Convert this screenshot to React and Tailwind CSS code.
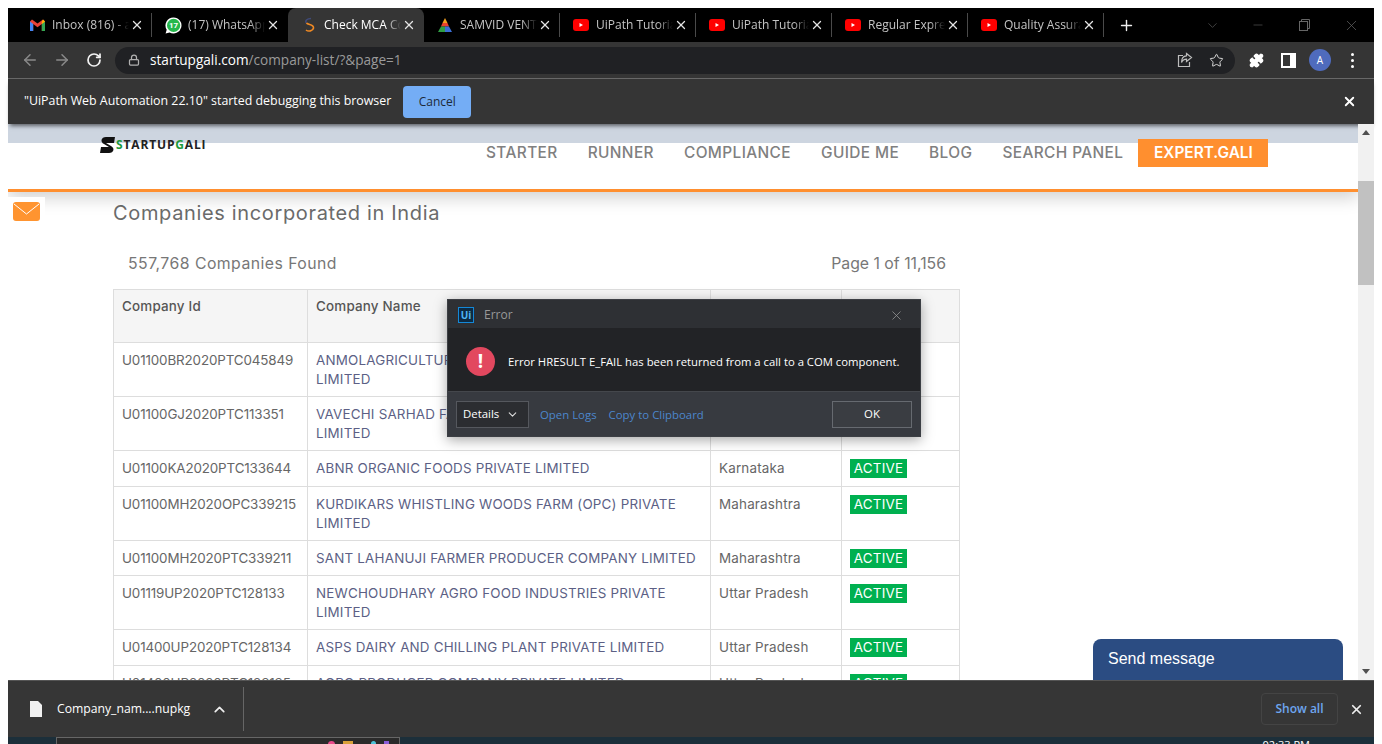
import { ArrowLeft, ArrowRight, RotateCw, Lock, Star, Puzzle, X, Plus, ChevronDown, ChevronUp, Minus } from 'lucide-react';

const GmailIcon = () => (
  <svg width="15" height="12" viewBox="0 0 15 12" className="shrink-0">
    <path d="M0 2.5 V12 H3.2 V5 L7.5 8.2 L11.8 5 V12 H15 V2.5 L13 .4 L7.5 4.6 L2 .4 Z" fill="#ea4335" />
    <path d="M0 2.5 V12 H3.2 V5 Z" fill="#4285f4" />
    <path d="M15 2.5 V12 H11.8 V5 Z" fill="#34a853" />
    <path d="M13 .4 L15 2.5 L11.8 5 V2.9 Z" fill="#fbbc04" />
  </svg>
);

const WhatsAppIcon = () => (
  <svg width="17" height="17" viewBox="0 0 17 17" className="shrink-0">
    <path d="M8.5 .5 A8 8 0 1 1 4.6 15.5 L.6 16.5 L1.7 12.7 A8 8 0 0 1 8.5 .5 Z" fill="#fff" />
    <circle cx="8.6" cy="8.4" r="6.6" fill="#25b84c" />
    <text x="8.6" y="11.2" textAnchor="middle" fontSize="8" fontWeight="700" fill="#fff" fontFamily="Roboto, sans-serif">17</text>
  </svg>
);

const SwirlIcon = () => (
  <svg width="14" height="16" viewBox="0 0 14 16" fill="none" className="shrink-0">
    <path d="M9 1.5 C5 1.5 2.5 4 4.5 6" stroke="#3f4a78" strokeWidth="1.5" />
    <path d="M4.5 6 C6 8 12 7.5 11.5 11 C11 14 6.5 15 4 13" stroke="#f08a24" strokeWidth="1.6" />
  </svg>
);

const TriangleIcon = () => (
  <svg width="16" height="16" viewBox="0 0 16 16" className="shrink-0">
    <polygon points="8,1 10.5,6 5.5,6" fill="#f2a01f" />
    <polygon points="5.5,6 10.5,6 12,9.5 4,9.5" fill="#e8432e" />
    <polygon points="4,9.5 8,9.5 8,15 1,15" fill="#2f9e44" />
    <polygon points="8,9.5 12,9.5 15,15 8,15" fill="#3b6fd6" />
  </svg>
);

const YoutubeIcon = () => (
  <svg width="16" height="14" viewBox="0 0 16 14" className="shrink-0">
    <rect x="0" y="1" width="16" height="12" rx="3" fill="#f00" />
    <polygon points="6.5,5 10,7 6.5,9" fill="#fff" />
  </svg>
);

const tabs = [
  { icon: GmailIcon, title: 'Inbox (816) - abc' },
  { icon: WhatsAppIcon, title: '(17) WhatsApp' },
  { icon: SwirlIcon, title: 'Check MCA Company', active: true },
  { icon: TriangleIcon, title: 'SAMVID VENTURES' },
  { icon: YoutubeIcon, title: 'UiPath Tutorial' },
  { icon: YoutubeIcon, title: 'UiPath Tutorial' },
  { icon: YoutubeIcon, title: 'Regular Expression' },
  { icon: YoutubeIcon, title: 'Quality Assurance' },
];

const navItems = ['STARTER', 'RUNNER', 'COMPLIANCE', 'GUIDE ME', 'BLOG', 'SEARCH PANEL'];

const rows = [
  { id: 'U01100BR2020PTC045849', name: 'ANMOLAGRICULTURE PRODUCER COMPANY\nLIMITED', state: 'Bihar', h: 'h-[54px]' },
  { id: 'U01100GJ2020PTC113351', name: 'VAVECHI SARHAD FARMERS PRODUCER COMPANY\nLIMITED', state: 'Gujarat', h: 'h-[54px]' },
  { id: 'U01100KA2020PTC133644', name: 'ABNR ORGANIC FOODS PRIVATE LIMITED', state: 'Karnataka', h: 'h-[36px]' },
  { id: 'U01100MH2020OPC339215', name: 'KURDIKARS WHISTLING WOODS FARM (OPC) PRIVATE\nLIMITED', state: 'Maharashtra', h: 'h-[54px]' },
  { id: 'U01100MH2020PTC339211', name: 'SANT LAHANUJI FARMER PRODUCER COMPANY LIMITED', state: 'Maharashtra', h: 'h-[35px]' },
  { id: 'U01119UP2020PTC128133', name: 'NEWCHOUDHARY AGRO FOOD INDUSTRIES PRIVATE\nLIMITED', state: 'Uttar Pradesh', h: 'h-[54px]' },
  { id: 'U01400UP2020PTC128134', name: 'ASPS DAIRY AND CHILLING PLANT PRIVATE LIMITED', state: 'Uttar Pradesh', h: 'h-[36px]' },
  { id: 'U01400UP2020PTC128135', name: 'AGRO PRODUCER COMPANY PRIVATE LIMITED', state: 'Uttar Pradesh', h: 'h-[35px]' },
];

const TabStrip = () => (
  <div className="h-[34px] bg-black flex items-stretch pl-2 shrink-0">
    {tabs.map((tab, i) => {
      const Icon = tab.icon;
      const nextActive = tabs[i + 1]?.active;
      return (
        <div key={i} className={`w-[136px] flex items-center ${tab.active ? 'bg-[#353535] rounded-t-lg' : ''}`}>
          <div className={`w-full h-6 flex items-center pl-[13px] border-r ${tab.active || nextActive ? 'border-transparent' : 'border-[#4a4a4a]'}`}>
            <div className="w-4 flex justify-center shrink-0"><Icon /></div>
            <div className={`ml-[7px] w-[77px] overflow-hidden whitespace-nowrap text-[12px] [mask-image:linear-gradient(to_right,black_80%,transparent)] ${tab.active ? 'text-white' : 'text-[#c4c4c4]'}`}>
              {tab.title}
            </div>
            <X size={14} strokeWidth={2.2} className="ml-[1px] text-[#e4e4e4] shrink-0" />
          </div>
        </div>
      );
    })}
    <div className="flex items-center ml-[14px]"><Plus size={17} strokeWidth={2} className="text-[#eee]" /></div>
    <div className="ml-auto flex items-center text-[#666]">
      <ChevronDown size={15} strokeWidth={1} className="mr-[31px]" />
      <Minus size={14} strokeWidth={1} className="mr-[34px]" />
      <svg width="11" height="12" viewBox="0 0 11 12" fill="none" stroke="#666" className="mr-[33px]">
        <rect x=".5" y="2.5" width="8" height="9" />
        <path d="M2.5 2.5 V.5 H10.5 V9.5 H8.5" />
      </svg>
      <X size={17} strokeWidth={1} className="mr-[14px]" />
    </div>
  </div>
);

const Toolbar = () => (
  <div className="h-9 bg-[#353535] flex items-center shrink-0 pl-[13px]">
    <ArrowLeft size={18} className="text-[#8a8a8a]" />
    <ArrowRight size={18} className="ml-[14px] text-[#8a8a8a]" />
    <RotateCw size={16} strokeWidth={2.6} className="ml-[15px] text-[#f2f2f2]" />
    <div className="ml-[13px] w-[1120px] h-[27px] rounded-full bg-[#202124] flex items-center pl-[13px] pr-[11px]">
      <Lock size={12} strokeWidth={2.5} className="text-[#b0b0b0]" />
      <span className="ml-[10px] text-[13.6px] text-white">
        startupgali.com<span className="text-[#9a9a9a]">/company-list/?&amp;page=1</span>
      </span>
      <svg width="16" height="16" viewBox="0 0 16 16" fill="none" stroke="#bdbdbd" strokeWidth="1.2" className="ml-auto">
        <path d="M6 3.5 H1.5 V14.5 H12.5 V10" />
        <path d="M9.5 1.5 L14.5 5.5 L9.5 9.5 V7.2 C7 7.2 5.5 8.2 4.5 10.5 C4.5 6.5 6.5 4 9.5 3.8 Z" />
      </svg>
      <Star size={15} strokeWidth={1.6} className="ml-[16px] text-[#d8d8d8]" />
    </div>
    <Puzzle size={15} strokeWidth={2} fill="#fff" className="ml-[14px] text-white" />
    <div className="ml-[17px] w-[15px] h-[15px] border-2 border-white border-r-[6px]" />
    <div className="ml-[13px] w-[22px] h-[22px] rounded-full bg-[#4f6bbd] flex items-center justify-center text-[10px] text-white">A</div>
    <div className="ml-[20px] flex flex-col gap-[3px]">
      <span className="w-[3px] h-[3px] rounded-full bg-white" />
      <span className="w-[3px] h-[3px] rounded-full bg-white" />
      <span className="w-[3px] h-[3px] rounded-full bg-white" />
    </div>
  </div>
);

const InfoBar = () => (
  <div className="h-[46px] bg-[#353535] border-t border-[#686868] flex items-center pl-4 pr-[17px] shrink-0 relative z-10 shadow-[0_4px_4px_-2px_rgba(0,0,0,0.55)]">
    <span className="text-[12.4px] text-white">"UiPath Web Automation 22.10" started debugging this browser</span>
    <button className="ml-3 w-[68px] h-8 rounded bg-[#74adf5] text-[12px] text-[#1d2a3a]">Cancel</button>
    <X size={15} strokeWidth={3} className="ml-auto text-white" />
  </div>
);

const Logo = () => (
  <div className="flex items-center ml-[92px] mt-[12px] h-[18px] w-[360px] self-start">
    <svg width="16" height="18" viewBox="0 0 16 18" className="shrink-0">
      <path d="M15 1 L6 1 C1 1 0 6 4 8 L9 11 L1 11 L0 17 L9 17 C14 17 15 12 11 10 L6 7 L14 7 Z" fill="#111" />
    </svg>
    <span className="text-[12px] font-bold tracking-[0.85px] text-[#222] font-['Open_Sans',sans-serif]">
      <span className="text-[#1c9a3c]">S</span>TARTUP<span className="text-[#1c9a3c]">G</span>ALI
    </span>
  </div>
);

const Header = () => (
  <header className="h-[68px] shrink-0 flex items-start border-b-[3px] border-[#ff8f2f] bg-[linear-gradient(#cdd5e0_19px,white_19px)] shadow-[0_6px_16px_rgba(0,0,0,0.18)] relative">
    <Logo />
    <nav className="ml-[26px] mt-[15px] h-7 flex items-center text-[15.4px] tracking-[0.4px] font-medium text-[#808080] gap-[30px]">
      {navItems.map((item) => (
        <span key={item} className="whitespace-nowrap">{item}</span>
      ))}
      <span className="-ml-[15px] w-[130px] h-7 bg-[#ff8f2f] text-white font-semibold tracking-normal flex items-center justify-center">EXPERT.GALI</span>
    </nav>
  </header>
);

const CompanyTable = () => (
  <table className="w-[846px] table-fixed border-collapse text-[13.4px] leading-[18.5px] tracking-[0.2px] text-[#666]">
    <colgroup>
      <col className="w-[194px]" />
      <col className="w-[403px]" />
      <col className="w-[131px]" />
      <col className="w-[118px]" />
    </colgroup>
    <thead>
      <tr className="h-[53px] bg-[#f5f5f5] text-[#555]">
        <th className="border border-[#ddd] px-2 pt-[7px] align-top text-left font-medium">Company Id</th>
        <th className="border border-[#ddd] px-2 pt-[7px] align-top text-left font-medium">Company Name</th>
        <th className="border border-[#ddd] px-2 pt-[7px] align-top text-left font-medium">State</th>
        <th className="border border-[#ddd] px-2 pt-[7px] align-top text-left font-medium">Status</th>
      </tr>
    </thead>
    <tbody>
      {rows.map((row) => (
        <tr key={row.id} className={row.h}>
          <td className="border border-[#ddd] px-2 pt-2 pb-[7px] align-top tracking-[-0.13px]">{row.id}</td>
          <td className="border border-[#ddd] px-2 pt-2 pb-[7px] align-top text-[#5c5f85] whitespace-pre-line">{row.name}</td>
          <td className="border border-[#ddd] px-2 pt-2 pb-[7px] align-top">{row.state}</td>
          <td className="border border-[#ddd] px-2 pt-2 pb-[7px] align-top">
            <span className="block w-[57px] h-[19px] bg-[#00b050] text-white text-center leading-[19px]">ACTIVE</span>
          </td>
        </tr>
      ))}
    </tbody>
  </table>
);

const ErrorDialog = () => (
  <div className="absolute left-[439px] top-[175px] w-[474px] h-[138px] z-20 flex flex-col border border-[#3c3f44] shadow-[0_3px_12px_rgba(0,0,0,0.35)] font-['Open_Sans',sans-serif]">
    <div className="h-[28px] bg-[#2e3034] flex items-center pl-[10px] pr-[16px] pt-[2px] shrink-0">
      <div className="w-4 h-4 border border-[#1488d8] bg-[#0d2a42] text-[#4fb4f5] text-[10px] font-bold leading-[14px] text-center">Ui</div>
      <span className="ml-[10px] text-[12px] text-[#999]">Error</span>
      <X size={15} strokeWidth={1.2} className="ml-auto text-[#999]" />
    </div>
    <div className="h-[64px] bg-[#222326] flex items-center pl-[18px] pt-1 border-b border-[#44474c] shrink-0">
      <div className="w-[29px] h-[29px] rounded-full bg-[#e2485f] text-white flex items-center justify-center text-[19px] font-bold">!</div>
      <span className="ml-[13px] mt-[2px] text-[11.3px] text-white whitespace-nowrap">Error HRESULT E_FAIL has been returned from a call to a COM component.</span>
    </div>
    <div className="flex-1 bg-[#373a40] flex items-center pl-2 pr-2">
      <div className="w-[73px] h-[27px] border border-[#55585e] bg-[#2b2d31] flex items-center pl-[6px] text-[11.4px] text-white">
        Details<ChevronDown size={13} className="ml-[7px] text-[#ddd]" />
      </div>
      <span className="ml-[11px] mt-[2px] text-[11.4px] text-[#4c86cc]">Open Logs</span>
      <span className="ml-3 mt-[2px] text-[11.4px] text-[#4c86cc]">Copy to Clipboard</span>
      <button className="ml-auto w-[80px] h-[27px] border border-[#666a70] bg-[#3a3d42] text-[11.4px] text-white">OK</button>
    </div>
  </div>
);

const Scrollbar = () => (
  <div className="w-4 bg-[#f1f1f1] shrink-0 flex flex-col items-center relative z-10">
    <div className="mt-[6px] w-0 h-0 border-x-4 border-x-transparent border-b-[5px] border-b-[#505050]" />
    <div className="mt-[46px] w-full h-[104px] bg-[#c1c1c1]" />
    <div className="mt-auto mb-[6px] w-0 h-0 border-x-4 border-x-transparent border-t-[5px] border-t-[#505050]" />
  </div>
);

const Page = () => (
  <div className="h-[556px] flex overflow-hidden shrink-0 bg-white">
    <div className="relative flex-1 flex flex-col overflow-hidden font-['Inter',sans-serif]">
      <Header />
      <div className="absolute left-0 top-[73px] w-[37px] h-[33px] bg-white pl-[5px] pt-[5px]">
        <svg width="27" height="19" viewBox="0 0 27 19">
          <rect width="27" height="19" rx="3" fill="#ff9430" />
          <path d="M1 2 L13.5 12 L26 2" fill="none" stroke="#fff" strokeWidth="1" />
        </svg>
      </div>
      <main className="pl-[105px] pt-[9px]">
        <h1 className="text-[20px] leading-[24px] tracking-[0.65px] text-[#6b6b6b]">Companies incorporated in India</h1>
        <div className="w-[833px] mt-[27px] pl-[15px] flex justify-between text-[15.8px] leading-[24px] text-[#777]">
          <span className="tracking-[0.46px]">557,768 Companies Found</span>
          <span>Page 1 of 11,156</span>
        </div>
        <div className="mt-[13px]"><CompanyTable /></div>
      </main>
      <ErrorDialog />
      <div className="absolute left-[1085px] top-[515px] w-[250px] h-[60px] rounded-t-lg bg-[#2b4c82] pl-[15px] pt-2 text-[16px] text-white font-['Liberation_Sans',sans-serif]">
        Send message
      </div>
    </div>
    <Scrollbar />
  </div>
);

const DownloadBar = () => (
  <div className="h-[57px] bg-[#363636] border-t border-[#555] flex items-center pl-[22px] pr-[10px] shrink-0 relative z-10">
    <svg width="12" height="16" viewBox="0 0 12 16" className="shrink-0">
      <path d="M0 0 H8 L12 4 V16 H0 Z" fill="#f1f1f1" />
    </svg>
    <span className="ml-[15px] text-[12.2px] text-white">Company_nam....nupkg</span>
    <ChevronUp size={17} strokeWidth={2.4} className="ml-[21px] text-[#eee]" />
    <div className="ml-[15px] w-px h-[44px] bg-[#666]" />
    <div className="ml-auto w-[77px] h-[32px] border border-[#444] rounded flex items-center justify-center text-[12px] font-semibold text-[#6ea6f0]">Show all</div>
    <X size={15} strokeWidth={2.8} className="ml-[11px] text-[#eee]" />
  </div>
);

const Taskbar = () => (
  <div className="h-[7px] bg-[#1c2f3a] flex overflow-hidden shrink-0 pl-[48px]">
    <div className="w-[344px] h-6 border border-[#666] bg-[#2a2a2a] flex pl-[271px] gap-[8px] pt-[3px]">
      <span className="w-[7px] h-[7px] rounded-full bg-[#e84a8a]" />
      <span className="w-[10px] h-[7px] bg-[#d8a13a]" />
      <span className="ml-[10px] w-[5px] h-[5px] rounded-full bg-[#4cc3d9]" />
      <span className="w-[5px] h-[5px] bg-[#8a5cd8]" />
    </div>
    <span className="ml-auto mr-[64px] mt-[1px] text-[11px] leading-[14px] text-white">02:33 PM</span>
  </div>
);

export default function App() {
  return (
    <div className="w-[1382px] h-[744px] bg-white px-2 pt-2 overflow-hidden font-['Open_Sans',sans-serif]">
      <div className="flex flex-col h-full">
        <TabStrip />
        <Toolbar />
        <InfoBar />
        <Page />
        <DownloadBar />
        <Taskbar />
      </div>
    </div>
  );
}
